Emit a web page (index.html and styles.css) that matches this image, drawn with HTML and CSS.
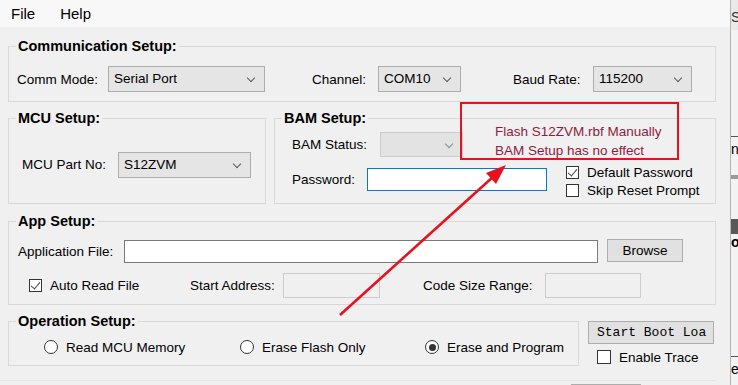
FILE: index.html
```html
<!DOCTYPE html>
<html lang="en">
<head>
    <meta charset="UTF-8">
    <title>S12Z Boot Loader</title>
    <link rel="stylesheet" href="styles.css">
</head>
<body>

<div class="app">
    <div class="window">
        <!-- Menu -->
        <div class="menubar">
            <span class="menu-item">File</span>
            <span class="menu-item">Help</span>
        </div>

        <div class="content">
            <!-- Communication Setup -->
            <fieldset class="group group-comm">
                <legend>Communication Setup:</legend>
                <div class="group-body row">
                    <span class="label w-comm">Comm Mode:</span>
                    <div class="combo w-157">Serial Port<i class="chev"></i></div>
                    <span class="label w-chan">Channel:</span>
                    <div class="combo w-83">COM10<i class="chev"></i></div>
                    <span class="label w-baud">Baud Rate:</span>
                    <div class="combo w-99">115200<i class="chev"></i></div>
                </div>
            </fieldset>

            <div class="split">
                <!-- MCU Setup -->
                <fieldset class="group group-mcu">
                    <legend>MCU Setup:</legend>
                    <div class="group-body mcu-body">
                        <span class="label w-96">MCU Part No:</span>
                        <div class="combo w-133">S12ZVM<i class="chev"></i></div>
                    </div>
                </fieldset>

                <!-- BAM Setup -->
                <fieldset class="group group-bam">
                    <legend>BAM Setup:</legend>
                    <div class="group-body bam-body">
                        <div class="bam-fields">
                            <div class="row">
                                <span class="label w-88">BAM Status:</span>
                                <div class="combo combo-off w-83"><i class="chev"></i></div>
                            </div>
                            <div class="row pw-row">
                                <span class="label w-75">Password:</span>
                                <div class="textbox textbox-focus w-180"></div>
                            </div>
                        </div>
                        <div class="bam-checks">
                            <div class="check-row"><span class="check on"></span>Default Password</div>
                            <div class="check-row"><span class="check"></span>Skip Reset Prompt</div>
                        </div>
                    </div>
                </fieldset>
            </div>

            <!-- App Setup -->
            <fieldset class="group group-app">
                <legend>App Setup:</legend>
                <div class="group-body app-body">
                    <div class="row app-file">
                        <span class="label w-106">Application File:</span>
                        <div class="textbox w-474"></div>
                        <div class="button browse">Browse</div>
                    </div>
                    <div class="row app-opts">
                        <div class="check-row w-161"><span class="check on"></span>Auto Read File</div>
                        <span class="label w-93">Start Address:</span>
                        <div class="textbox textbox-off w-97"></div>
                        <span class="label w-code">Code Size Range:</span>
                        <div class="textbox textbox-off w-96"></div>
                    </div>
                </div>
            </fieldset>

            <div class="split">
                <!-- Operation Setup -->
                <fieldset class="group group-op">
                    <legend>Operation Setup:</legend>
                    <div class="group-body op-body row">
                        <div class="radio-row w-196"><span class="radio"></span>Read MCU Memory</div>
                        <div class="radio-row w-185"><span class="radio"></span>Erase Flash Only</div>
                        <div class="radio-row"><span class="radio on"></span>Erase and Program</div>
                    </div>
                </fieldset>

                <div class="side">
                    <div class="button start">Start Boot Loa</div>
                    <div class="check-row trace"><span class="check big"></span>Enable Trace</div>
                </div>
            </div>

            <div class="footer">
                <div class="button footer-btn"></div>
            </div>
        </div>
    </div>

    <!-- window behind, peeking out on the right -->
    <div class="behind">
        <div class="behind-top">S</div>
        <div class="behind-line"></div>
        <div class="behind-text">nc</div>
        <div class="behind-bar light"></div>
        <div class="behind-bar dark"></div>
        <div class="behind-text bold">o</div>
        <div class="behind-line"></div>
        <div class="behind-text low">e</div>
        <div class="behind-text bold">n</div>
    </div>

    <!-- annotation drawn over the screenshot -->
    <div class="note">
        Flash S12ZVM.rbf Manually<br>
        BAM Setup has no effect
    </div>
    <svg class="arrow" width="738" height="385" viewBox="0 0 738 385">
        <line x1="340" y1="315" x2="494" y2="176" stroke="#e8111d" stroke-width="2.6"/>
        <polygon points="506,165 496,184 486,173" fill="#e8111d"/>
    </svg>
</div>

</body>
</html>
```

FILE: styles.css
```css
/* General */
body {
    margin: 0;
    padding: 0;
    background-color: #f0f0f0;
    font-family: "Liberation Sans", Arial, sans-serif;
    font-size: 13.5px;
    color: #000;
}

.app {
    position: relative;
    display: flex;
    width: 738px;
    height: 385px;
    overflow: hidden;
}

.window {
    width: 730px;
    flex-shrink: 0;
    background-color: #f0f0f0;
}

/* Menu */
.menubar {
    height: 27px;
    display: flex;
    align-items: center;
    background-color: #f8f8f8;
    font-size: 15px;
    padding-left: 11px;
}

.menu-item {
    margin-right: 25px;
}

.content {
    padding-left: 8px;
    width: 708px;
}

/* Group boxes */
.group {
    margin: 0;
    padding: 0;
    min-width: 0;
    border: 1px solid #d9d9d9;
    border-radius: 0;
}

.group legend {
    margin-left: 7px;
    padding: 0 2px;
    font-weight: bold;
    font-size: 14.5px;
    line-height: 16px;
    height: 16px;
}

.row {
    display: flex;
    align-items: center;
}

.label {
    flex-shrink: 0;
    white-space: nowrap;
}

.group-comm {
    margin-top: 11px;
}

.group-comm .group-body {
    padding: 12px 0 9px 8px;
}

.w-comm { width: 91px; }
.w-chan { width: 66px; margin-left: 47px; }
.w-baud { width: 80px; margin-left: 52px; }
.w-157 { width: 157px; }
.w-83 { width: 83px; }
.w-99 { width: 99px; }
.w-96 { width: 96px; }
.w-133 { width: 133px; }
.w-88 { width: 88px; }
.w-75 { width: 75px; }
.w-180 { width: 180px; }
.w-106 { width: 106px; }
.w-474 { width: 474px; }
.w-161 { width: 161px; }
.w-93 { width: 93px; }
.w-97 { width: 97px; }
.w-code { width: 122px; margin-left: 43px; }
.w-196 { width: 196px; }
.w-185 { width: 185px; }

/* Combo boxes */
.combo {
    position: relative;
    box-sizing: border-box;
    height: 26px;
    line-height: 24px;
    padding-left: 5px;
    background-color: #e5e5e5;
    border: 1px solid #adadad;
    flex-shrink: 0;
}

.chev {
    position: absolute;
    right: 10px;
    top: 8px;
    width: 5px;
    height: 5px;
    border-right: 1px solid #5a5a5a;
    border-bottom: 1px solid #5a5a5a;
    transform: rotate(45deg);
}

.combo-off {
    height: 25px;
    background-color: #e3e3e3;
    border-color: #cccccc;
}

.combo-off .chev {
    border-color: #8a8a8a;
}

/* Text boxes */
.textbox {
    box-sizing: border-box;
    height: 23px;
    background-color: #fff;
    border: 1px solid #7a7a7a;
    flex-shrink: 0;
}

.textbox-focus {
    border-color: #0078d7;
}

.textbox-off {
    height: 25px;
    background-color: #f0f0f0;
    border-color: #cccccc;
}

/* Buttons */
.button {
    box-sizing: border-box;
    height: 23px;
    line-height: 21px;
    text-align: center;
    background-color: #e1e1e1;
    border: 1px solid #adadad;
    flex-shrink: 0;
}

/* MCU / BAM */
.split {
    display: flex;
    margin-top: 8px;
}

.group-mcu {
    width: 258px;
    box-sizing: border-box;
}

.mcu-body {
    height: 77px;
    display: flex;
    align-items: center;
    padding-left: 13px;
}

.group-bam {
    width: 442px;
    box-sizing: border-box;
    margin-left: 8px;
}

.bam-body {
    height: 77px;
    display: flex;
    padding-left: 17px;
}

.bam-fields {
    padding-top: 6px;
}

.pw-row {
    margin-top: 11px;
}

.bam-checks {
    margin-left: 19px;
    padding-top: 37px;
}

/* Check boxes and radios */
.check-row,
.radio-row {
    display: flex;
    align-items: center;
    height: 18px;
    white-space: nowrap;
}

.check {
    position: relative;
    box-sizing: border-box;
    width: 13px;
    height: 13px;
    margin-right: 8px;
    background-color: #fff;
    border: 1px solid #333;
    flex-shrink: 0;
}

.check.big {
    width: 14px;
    height: 14px;
}

.check.on::after {
    content: "";
    position: absolute;
    left: 3px;
    top: 0px;
    width: 4px;
    height: 8px;
    border-right: 1.5px solid #444;
    border-bottom: 1.5px solid #444;
    transform: rotate(40deg);
}

.radio {
    position: relative;
    box-sizing: border-box;
    width: 14px;
    height: 14px;
    margin-right: 8px;
    border-radius: 50%;
    background-color: #fff;
    border: 1px solid #333;
    flex-shrink: 0;
}

.radio.on::after {
    content: "";
    position: absolute;
    left: 2.5px;
    top: 2.5px;
    width: 7px;
    height: 7px;
    border-radius: 50%;
    background-color: #333;
}

/* App Setup */
.group-app {
    margin-top: 9px;
}

.app-body {
    padding: 11px 0 6px 0;
}

.app-file {
    padding-left: 9px;
}

.browse {
    width: 76px;
    margin-left: 9px;
    margin-top: -2px;
}

.app-opts {
    margin-top: 10px;
    padding-left: 20px;
}

/* Operation Setup */
.group-op {
    width: 571px;
    box-sizing: border-box;
}

.op-body {
    height: 20px;
    padding: 8px 0 6px 35px;
}

.side {
    margin-left: 9px;
    padding-top: 8px;
    width: 126px;
}

.start {
    width: 126px;
    font-family: "Liberation Mono", "Courier New", monospace;
    font-size: 13px;
    text-align: left;
    padding-left: 8px;
    white-space: nowrap;
    overflow: hidden;
}

.trace {
    margin-top: 4px;
    padding-left: 9px;
}

/* Footer */
.footer {
    margin-top: 14px;
    border-top: 1px solid #e4e4e4;
    margin-left: -8px;
    width: 716px;
    height: 20px;
}

.footer-btn {
    width: 70px;
    margin-left: 571px;
    margin-top: 3px;
}

/* Window behind */
.behind {
    width: 8px;
    flex-shrink: 0;
    border-left: 1px solid #b5b5b5;
    background-color: #f3f3f3;
    font-size: 14px;
    overflow: hidden;
    white-space: nowrap;
}

.behind-top {
    height: 30px;
    line-height: 34px;
    background-color: #e9e9e9;
    color: #333;
}

.behind-line {
    height: 1px;
    margin-top: 106px;
    background-color: #555;
}

.behind-line + .behind-text {
    margin-top: 4px;
}

.behind-bar.light {
    margin-top: 18px;
    height: 4px;
    background-color: #9a9a9a;
}

.behind-bar.dark {
    margin-top: 40px;
    height: 15px;
    background-color: #595959;
}

.behind-text.bold {
    font-weight: bold;
    margin-top: 0;
}

.behind-text.low {
    margin-top: 4px;
}

.behind-text.low + .behind-text {
    margin-top: 14px;
}

/* Annotation */
.note {
    position: absolute;
    left: 460px;
    top: 102px;
    width: 219px;
    height: 58px;
    box-sizing: border-box;
    border: 2px solid #e8111d;
    padding: 18px 0 0 33px;
    line-height: 19px;
    color: #8e1c3f;
}

.arrow {
    position: absolute;
    left: 0;
    top: 0;
    pointer-events: none;
}
```
